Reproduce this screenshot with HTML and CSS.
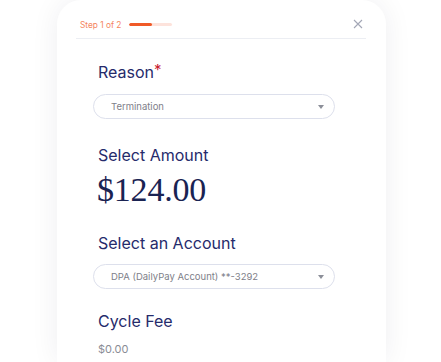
FILE: index.html
```html
<!DOCTYPE html>
<html>
<head>
<meta charset="utf-8">
<link rel="stylesheet" href="styles.css">
</head>
<body>
<div class="page">
  <div class="card">
    <div class="header">
      <span class="step">Step 1 of 2</span>
      <div class="progress"><div class="progress-fill"></div></div>
      <span class="spacer"></span>
      <svg class="close" width="10" height="10" viewBox="0 0 10 10"><path d="M1 1L9 9M9 1L1 9" stroke="#a3a7b6" stroke-width="1.1" fill="none"/></svg>
    </div>
    <div class="body">
      <div class="label label-reason">Reason<span class="req">*</span></div>
      <div class="select"><span>Termination</span><span class="caret"></span></div>
      <div class="label label-amount">Select Amount</div>
      <div class="amount">$124.00</div>
      <div class="label label-account">Select an Account</div>
      <div class="select select-account"><span>DPA (DailyPay Account) **-3292</span><span class="caret"></span></div>
      <div class="label label-fee">Cycle Fee</div>
      <div class="fee">$0.00</div>
    </div>
  </div>
</div>
</body>
</html>
```
FILE: styles.css
```css
html, body {
  margin: 0;
  padding: 0;
  background: #ffffff;
  height: 100%;
  overflow: hidden;
}
.page {
  display: flex;
  padding-left: 57px;
  padding-top: 0;
}
.card {
  width: 329px;
  height: 362px;
  background: #ffffff;
  border-radius: 24px 24px 0 0;
  box-shadow: 0 0 28px rgba(20, 24, 60, 0.07);
  padding: 0 20px 0 19px;
  box-sizing: border-box;
  font-family: Inter, "Noto Sans", sans-serif;
}
.header {
  display: flex;
  align-items: center;
  height: 39px;
  padding: 0 4px 0 4px;
  border-bottom: 1px solid #eceef3;
  box-sizing: border-box;
  padding-top: 11px;
}
.step {
  font-size: 8.3px;
  color: #f5845d;
  letter-spacing: 0;
}
.progress {
  margin-left: 8px;
  width: 43px;
  height: 3px;
  border-radius: 2px;
  background: #fde3dc;
  overflow: hidden;
}
.progress-fill {
  width: 23px;
  height: 100%;
  border-radius: 2px;
  background: #f05a28;
}
.spacer { flex: 1; }
.close {
  margin-right: -1px;
  margin-top: -2px;
}
.body {
  display: flex;
  flex-direction: column;
  padding: 0 31px 0 17px;
}
.label {
  font-size: 16px;
  color: #262b6b;
  line-height: 18px;
  margin-left: 5px;
}
.req {
  color: #c8202f;
  font-size: 15px;
  vertical-align: top;
  line-height: 14px;
  margin-left: 0;
}
.label-reason { margin-top: 24px; }
.select {
  margin-top: 13px;
  height: 25px;
  border: 1px solid #dde0ec;
  border-radius: 13px;
  box-sizing: border-box;
  display: flex;
  align-items: center;
  justify-content: space-between;
  padding: 0 10px 0 17px;
  font-size: 9.5px;
  color: #7e8089;
}
.select-account { margin-top: 12px; }
.caret {
  width: 0;
  height: 0;
  border-left: 3px solid transparent;
  border-right: 3px solid transparent;
  border-top: 4px solid #8c8f99;
}
.label-amount { margin-top: 27px; }
.amount {
  font-family: "Liberation Serif", "DejaVu Serif", serif;
  font-size: 34px;
  color: #1a2352;
  margin-left: 4px;
  margin-top: 6px;
  line-height: 40px;
  letter-spacing: -0.2px;
}
.label-account { margin-top: 24px; }
.label-fee { margin-top: 23px; }
.fee {
  margin-left: 5px;
  margin-top: 12px;
  font-size: 11px;
  color: #8a8c95;
}
```
